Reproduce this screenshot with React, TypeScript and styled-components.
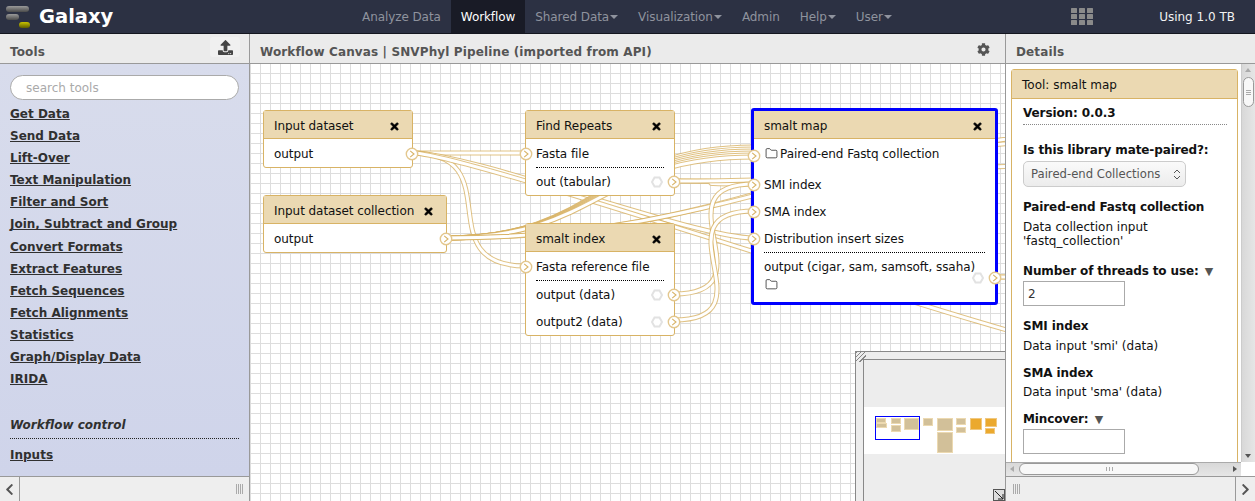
import React from 'react';
import styled, { createGlobalStyle } from 'styled-components';
import { FaCog, FaTimes, FaUpload, FaChevronLeft, FaChevronRight } from 'react-icons/fa';
import { Folder } from 'lucide-react';

const GlobalStyle = createGlobalStyle`
  html, body {
    margin: 0;
    height: 100%;
    overflow: hidden;
  }
  body {
    font-family: "DejaVu Sans", Verdana, sans-serif;
    font-size: 12px;
    color: #111;
  }
  * { box-sizing: border-box; }
`;

const Page = styled.div`
  width: 1255px;
  height: 501px;
  display: flex;
  flex-direction: column;
  overflow: hidden;
`;

const Masthead = styled.header`
  height: 34px;
  flex: none;
  display: flex;
  align-items: stretch;
  background: #2c3143;
  border-bottom: 1px solid #14161f;
`;

const Brand = styled.div`
  width: 352px;
  display: flex;
  align-items: center;
  gap: 8px;
  padding-left: 6px;
  color: #fff;
  font-size: 19.5px;
  font-weight: 700;
`;

const Nav = styled.nav`
  display: flex;
  width: 741px;
  letter-spacing: -0.08px;
`;

const NavItem = styled.a<{ $active?: boolean }>`
  display: flex;
  align-items: center;
  padding: 0 10px;
  color: ${props => (props.$active ? '#fff' : '#8f939e')};
  background: ${props => (props.$active ? '#191b26' : 'transparent')};
`;

const AppsItem = styled(NavItem)`
  margin-left: auto;
  padding: 0;
`;

const Caret = styled.span`
  width: 0;
  height: 0;
  margin-left: 1px;
  margin-top: 1px;
  border-left: 4px solid transparent;
  border-right: 4px solid transparent;
  border-top: 4px solid #8f939e;
`;

const Quota = styled.div`
  margin-left: auto;
  padding-right: 20px;
  display: flex;
  align-items: center;
  color: #f2f2f2;
`;

const Panels = styled.div`
  flex: 1;
  display: flex;
  min-height: 0;
`;

const SidePanel = styled.section<{ $width: number }>`
  width: ${props => props.$width}px;
  flex: none;
  display: flex;
  flex-direction: column;
`;

const CenterPanel = styled.section`
  flex: 1;
  display: flex;
  flex-direction: column;
  min-width: 0;
  border-left: 1px solid #999;
  border-right: 1px solid #999;
`;

const PanelHeader = styled.div`
  height: 30px;
  flex: none;
  display: flex;
  align-items: center;
  justify-content: space-between;
  padding: 6px 10px 0;
  background: #ebebeb;
  border-bottom: 1px solid #999;
  color: #555;
  font-weight: 700;
  letter-spacing: 0.13px;
`;

const UploadButton = styled.span`
  width: 30px;
  height: 20px;
  margin: -9px -1px 0 0;
  display: flex;
  align-items: center;
  justify-content: center;
  color: #444;
  background: #f0f0f0;
  border-radius: 3px;
`;

const CogButton = styled.span`
  display: flex;
  margin: -5px 5px 0 0;
  color: #555;
`;

const ToolsBody = styled.div`
  flex: 1;
  min-height: 0;
  padding: 11px 10px 0;
  background: linear-gradient(#d8dcec, #cfd4ea);
`;

const SearchInput = styled.input`
  display: block;
  width: 229px;
  height: 25px;
  padding: 0 15px;
  border: 1px solid #aaa;
  border-radius: 13px;
  background: #fff;
  font-family: inherit;
  font-size: 12px;
  margin-bottom: 2.95px;
  &::placeholder { color: #aaa; opacity: 1; }
`;

const ToolLink = styled.a`
  display: block;
  height: 22.1px;
  line-height: 22px;
  color: #303030;
  font-weight: 700;
  text-decoration: underline;
`;

const SectionLabel = styled.div`
  margin-top: 24px;
  padding-bottom: 5px;
  height: 25px;
  line-height: 22px;
  border-bottom: 1px dotted #222;
  color: #303030;
  font-weight: 700;
  font-style: italic;
  margin-bottom: 5px;
`;

const PanelFooter = styled.div<{ $flip?: boolean }>`
  height: 25px;
  flex: none;
  display: flex;
  flex-direction: ${props => (props.$flip ? 'row-reverse' : 'row')};
  align-items: stretch;
  background: #eee;
  border-top: 1px solid #999;
`;

const CollapseButton = styled.span<{ $flip?: boolean }>`
  width: 20px;
  display: flex;
  align-items: center;
  justify-content: center;
  color: #555;
  ${props => (props.$flip ? 'border-left' : 'border-right')}: 1px solid #999;
`;

const DragHandle = styled.span<{ $flip?: boolean }>`
  width: 8px;
  height: 10px;
  align-self: center;
  ${props => (props.$flip ? 'margin-right: 214px;' : 'margin-left: 216px;')}
  background: repeating-linear-gradient(90deg, #aaa 0 1px, transparent 1px 2px);
`;

const Canvas = styled.div`
  position: relative;
  flex: 1;
  min-height: 0;
  overflow: hidden;
  background-color: #fff;
  background-image:
    linear-gradient(#ddd 1px, transparent 1px),
    linear-gradient(90deg, #ddd 1px, transparent 1px);
  background-size: 10px 10px;
  background-position: 0 9px, 0 0;
`;

const NoodleLayer = styled.svg`
  position: absolute;
  left: 0;
  top: 0;
  overflow: visible;
`;

const Node = styled.div<{ $x: number; $y: number; $w: number; $selected?: boolean }>`
  position: absolute;
  left: ${props => props.$x}px;
  top: ${props => props.$y}px;
  width: ${props => props.$w}px;
  background: #fff;
  border: ${props => (props.$selected ? '3px solid #0000ff' : '1px solid #d8b365')};
  border-radius: 3px;
  letter-spacing: -0.06px;
`;

const NodeTitle = styled.div`
  height: 28px;
  display: flex;
  align-items: center;
  justify-content: space-between;
  padding: 2px 12px 0 10px;
  background: #ebd9b2;
  border-bottom: 1px solid #d8b365;
`;

const NodeClose = styled.span`
  display: flex;
  margin-top: 1px;
  color: #000;
  svg { stroke: #000; stroke-width: 30; }
`;

const NodeBody = styled.div`
  padding: 1px 10px 0;
`;

const Row = styled.div<{ $tall?: boolean }>`
  position: relative;
  min-height: ${props => (props.$tall ? 31 : 27)}px;
  padding-bottom: ${props => (props.$tall ? 4 : 0)}px;
  display: flex;
  align-items: center;
  gap: 1px;
  white-space: nowrap;
`;

const OutputRows = styled.div`
  border-top: 1px dotted #000;
`;

const MultiLine = styled.div`
  padding: 6px 0 11px;
  line-height: 16px;
  display: flex;
  flex-direction: column;
  align-items: flex-start;
  gap: 3px;
`;

const Terminal = styled.svg`
  position: absolute;
  top: 50%;
  margin-top: -7px;
`;

const InTerminalIcon = styled(Terminal)`
  left: -17px;
`;

const OutTerminalIcon = styled(Terminal)`
  right: -17px;
`;

const Callout = styled.svg`
  position: absolute;
  top: 50%;
  right: 1px;
  margin-top: -6px;
`;

const FolderIcon = styled(Folder)`
  margin: 0 1px 0 1px;
  flex: none;
`;

const Overview = styled.div`
  position: absolute;
  right: 0;
  bottom: 0;
  width: 150px;
  height: 150px;
  background: #ededed;
  border: 1px solid #888;
  border-width: 1px 0 0 1px;
  padding: 7px 0 0 7px;
`;

const OverviewGrip = styled.span`
  position: absolute;
  left: 0;
  top: 0;
  width: 10px;
  height: 10px;
  background: repeating-linear-gradient(135deg, #888 0 1px, transparent 1px 3px);
`;

const OverviewInner = styled.div`
  position: relative;
  height: 100%;
  background: #ededed;
  border: 1px solid #888;
  border-width: 1px 0 0 1px;
`;

const OverviewBand = styled.div`
  position: absolute;
  left: 0;
  right: 0;
  top: 47px;
  height: 47px;
  background: #fff;
`;

const MiniNode = styled.span<{ $x: number; $y: number; $w: number; $h: number; $hot?: boolean }>`
  position: absolute;
  left: ${props => props.$x}px;
  top: ${props => props.$y}px;
  width: ${props => props.$w}px;
  height: ${props => props.$h}px;
  background: ${props => (props.$hot ? '#eba92e' : '#d2c099')};
  border: 1px solid ${props => (props.$hot ? '#f0c880' : '#ecd9b0')};
`;

const MiniViewport = styled.span`
  position: absolute;
  left: 11px;
  top: 56px;
  width: 45px;
  height: 24px;
  border: 1px solid #0000ff;
`;

const OverviewResize = styled.svg`
  position: absolute;
  right: 0;
  bottom: 0;
`;

const DetailsBody = styled.div`
  position: relative;
  flex: 1;
  min-height: 0;
  overflow: hidden;
  background: #fff;
`;

const ToolCard = styled.div`
  position: absolute;
  left: 5px;
  top: 5px;
  width: 227px;
  height: 500px;
  background: #fff;
  border: 1px solid #d8b365;
  border-radius: 3px 3px 0 0;
`;

const ToolCardTitle = styled.div`
  height: 29px;
  display: flex;
  align-items: center;
  padding: 2px 0 0 10px;
  background: #ebd9b2;
  border-bottom: 1px solid #d8b365;
`;

const ToolCardBody = styled.div`
  padding: 7px 10px 0 11px;
`;

const VersionLine = styled.div`
  height: 19px;
  padding-bottom: 3px;
  line-height: 15px;
  font-weight: 700;
  border-bottom: 1px dotted #888;
  width: 204px;
  margin-bottom: 18px;
  letter-spacing: -0.1px;
`;

const ParamLabel = styled.div<{ $gap?: number }>`
  font-weight: 700;
  line-height: 15px;
  margin-top: ${props => props.$gap ?? 0}px;
  white-space: nowrap;
  letter-spacing: -0.12px;
`;

const ParamText = styled.div<{ $gap: number }>`
  line-height: 14px;
  margin-top: ${props => props.$gap}px;
  white-space: nowrap;
`;

const Triangle = styled.span`
  color: #555;
  font-weight: 400;
  font-size: 11px;
  margin-left: 2px;
`;

const SelectBox = styled.div`
  width: 163px;
  height: 26px;
  margin-top: 3px;
  display: flex;
  align-items: center;
  justify-content: space-between;
  padding: 0 4px 0 7px;
  color: #555;
  font-size: 11.65px;
  background: linear-gradient(#fafafa, #ececec);
  border: 1px solid #ccc;
  border-radius: 5px;
`;

const NumberBox = styled.input`
  display: block;
  width: 102px;
  height: 25px;
  margin-top: 2px;
  padding: 0 4px;
  border: 1px solid #aaa;
  background: #fff;
  font-family: inherit;
  font-size: 12px;
  color: #333;
`;

const VerticalBar = styled.div`
  position: absolute;
  right: 0;
  top: 0;
  bottom: 14px;
  width: 14px;
  background: linear-gradient(90deg, #d8d8d8, #e6e6e6);
  border-left: 1px solid #ccc;
`;

const VerticalThumb = styled.span`
  position: absolute;
  left: 1px;
  top: 13px;
  width: 11px;
  height: 30px;
  display: flex;
  align-items: center;
  justify-content: center;
  background: #f8f8f8;
  border: 1px solid #999;
  border-radius: 6px;
  &::after {
    content: '';
    width: 5px;
    height: 5px;
    background: repeating-linear-gradient(#aaa 0 1px, transparent 1px 2px);
  }
`;

const HorizontalBar = styled.div`
  position: absolute;
  left: 0;
  right: 14px;
  bottom: 0;
  height: 14px;
  background: linear-gradient(#d8d8d8, #e6e6e6);
  border-top: 1px solid #aaa;
`;

const HorizontalThumb = styled.span`
  position: absolute;
  left: 13px;
  top: 0;
  width: 180px;
  height: 12px;
  display: flex;
  align-items: center;
  justify-content: center;
  background: #f8f8f8;
  border: 1px solid #999;
  border-radius: 6px;
  &::after {
    content: '';
    width: 7px;
    height: 4px;
    background: repeating-linear-gradient(90deg, #aaa 0 1px, transparent 1px 3px);
  }
`;

const ScrollArrow = styled.span<{ $dir: 'up' | 'down' | 'left' | 'right' }>`
  position: absolute;
  width: 0;
  height: 0;
  ${props => {
    switch (props.$dir) {
      case 'up':
        return 'left: 3px; top: 1px; border: 3px solid transparent; border-bottom: 4px solid #aaa;';
      case 'down':
        return 'left: 3px; bottom: 1px; border: 3px solid transparent; border-top: 4px solid #555;';
      case 'left':
        return 'left: 1px; top: 3px; border: 3px solid transparent; border-right: 4px solid #aaa;';
      default:
        return 'right: 1px; top: 3px; border: 3px solid transparent; border-left: 4px solid #555;';
    }
  }}
`;

const toolLinks = [
  'Get Data', 'Send Data', 'Lift-Over', 'Text Manipulation', 'Filter and Sort',
  'Join, Subtract and Group', 'Convert Formats', 'Extract Features', 'Fetch Sequences',
  'Fetch Alignments', 'Statistics', 'Graph/Display Data', 'IRIDA',
];

const navItems = [
  { label: 'Analyze Data' },
  { label: 'Workflow', active: true },
  { label: 'Shared Data', caret: true },
  { label: 'Visualization', caret: true },
  { label: 'Admin' },
  { label: 'Help', caret: true },
  { label: 'User', caret: true },
];

// canvas starts at page (250, 64), noodle points are in page coordinates
// x1, y1, x2, y2, control point shift
const noodles: [number, number, number, number, number][] = [
  [412, 153, 526, 153, 100],
  [412, 153, 526, 266, 100],
  [412, 153, 754, 238, 60],
  [412, 153, 1100, 352, 60],
  [446, 238, 754, 147, 154],
  [446, 238, 754, 149, 154],
  [446, 238, 754, 151, 154],
  [446, 238, 754, 153, 154],
  [446, 238, 754, 155, 154],
  [446, 238, 754, 157, 154],
  [446, 238, 1100, 140, 300],
  [446, 238, 1150, 130, 300],
  [674, 181, 754, 184, 100],
  [674, 181, 1100, 165, 200],
  [674, 294, 754, 184, 100],
  [674, 320, 754, 211, 100],
  [995, 277, 1100, 270, 100],
  [995, 277, 1100, 280, 100],
];

const noodlePath = ([x1, y1, x2, y2, shift]: [number, number, number, number, number]) => {
  const o = [x1 - 250, y1 - 64, x2 - 250, y2 - 64];
  return `M${o[0]} ${o[1]} C${o[0] + shift} ${o[1]} ${o[2] - shift} ${o[3]} ${o[2]} ${o[3]}`;
};

const miniNodes = [
  { x: 12, y: 58, w: 10, h: 5 },
  { x: 12, y: 63, w: 11, h: 5 },
  { x: 27, y: 58, w: 10, h: 6 },
  { x: 27, y: 65, w: 10, h: 7 },
  { x: 40, y: 58, w: 15, h: 12 },
  { x: 59, y: 58, w: 10, h: 8 },
  { x: 73, y: 58, w: 16, h: 13 },
  { x: 73, y: 72, w: 16, h: 21 },
  { x: 92, y: 58, w: 10, h: 7 },
  { x: 92, y: 67, w: 10, h: 6 },
  { x: 106, y: 58, w: 12, h: 12, hot: true },
  { x: 121, y: 58, w: 12, h: 9, hot: true },
  { x: 121, y: 68, w: 10, h: 6, hot: true },
];

const TerminalMark = () => (
  <>
    <circle cx="7" cy="7" r="5.7" fill="#fff" stroke="#e3c78e" strokeWidth="1.4" />
    <path d="M5.2 3.8 9 7 5.2 10.2" fill="none" stroke="#d8b365" strokeWidth="1.1" />
  </>
);

const InTerminal = () => (
  <InTerminalIcon width="14" height="14" viewBox="0 0 14 14"><TerminalMark /></InTerminalIcon>
);

const OutTerminal = () => (
  <OutTerminalIcon width="14" height="14" viewBox="0 0 14 14"><TerminalMark /></OutTerminalIcon>
);

const HexMark = () => (
  <Callout width="12" height="12" viewBox="0 0 12 12">
    <path d="M3.5 1.5h5L11 6 8.5 10.5h-5L1 6z" fill="#fff" stroke="#e2e2e2" strokeWidth="2" />
  </Callout>
);

const Logo = () => (
  <svg width="25" height="24" viewBox="0 0 25 24" style={{ marginTop: 3 }}>
    <defs>
      <linearGradient id="bar" x1="0" y1="0" x2="0" y2="1">
        <stop offset="0" stopColor="#9a9a9a" />
        <stop offset="1" stopColor="#4a4a4a" />
      </linearGradient>
      <linearGradient id="barHot" x1="0" y1="0" x2="0" y2="1">
        <stop offset="0" stopColor="#c9c400" />
        <stop offset="1" stopColor="#5f5c00" />
      </linearGradient>
    </defs>
    <rect x="0" y="0" width="23" height="6" rx="3" fill="url(#bar)" />
    <rect x="0" y="8" width="13" height="6" rx="3" fill="url(#bar)" />
    <rect x="13" y="16" width="11" height="6" rx="3" fill="url(#barHot)" />
  </svg>
);

const AppGrid = () => (
  <svg width="22" height="17" viewBox="0 0 22 17" fill="#8a8a8a">
    {[0, 6, 12].map(y =>
      [0, 8, 16].map(x => <rect key={`${x}-${y}`} x={x} y={y} width="6" height="5" rx="0.5" />)
    )}
  </svg>
);

const App: React.FC = () => {
  return (
    <Page>
      <GlobalStyle />
      <Masthead>
        <Brand>
          <Logo />
          Galaxy
        </Brand>
        <Nav>
          {navItems.map(item => (
            <NavItem key={item.label} $active={item.active}>
              {item.label}
              {item.caret && <Caret />}
            </NavItem>
          ))}
          <AppsItem><AppGrid /></AppsItem>
        </Nav>
        <Quota>Using 1.0 TB</Quota>
      </Masthead>

      <Panels>
        <SidePanel $width={249}>
          <PanelHeader>
            Tools
            <UploadButton><FaUpload size={15} /></UploadButton>
          </PanelHeader>
          <ToolsBody>
            <SearchInput placeholder="search tools" />
            {toolLinks.map(name => (
              <ToolLink key={name}>{name}</ToolLink>
            ))}
            <SectionLabel>Workflow control</SectionLabel>
            <ToolLink>Inputs</ToolLink>
          </ToolsBody>
          <PanelFooter>
            <CollapseButton><FaChevronLeft size={13} /></CollapseButton>
            <DragHandle />
          </PanelFooter>
        </SidePanel>

        <CenterPanel>
          <PanelHeader>
            Workflow Canvas | SNVPhyl Pipeline (imported from API)
            <CogButton><FaCog size={13} /></CogButton>
          </PanelHeader>
          <Canvas>
            <NoodleLayer width="755" height="437">
              {noodles.map((n, i) => (
                <g key={i} fill="none">
                  <path d={noodlePath(n)} stroke="#d8b365" strokeOpacity="0.8" strokeWidth="5" />
                  <path d={noodlePath(n)} stroke="#fff" strokeWidth="3" />
                </g>
              ))}
            </NoodleLayer>

            <Node $x={13} $y={46} $w={150}>
              <NodeTitle>Input dataset<NodeClose><FaTimes size={11} /></NodeClose></NodeTitle>
              <NodeBody>
                <Row>output<OutTerminal /></Row>
              </NodeBody>
            </Node>

            <Node $x={13} $y={131} $w={184}>
              <NodeTitle>Input dataset collection<NodeClose><FaTimes size={11} /></NodeClose></NodeTitle>
              <NodeBody>
                <Row>output<OutTerminal /></Row>
              </NodeBody>
            </Node>

            <Node $x={275} $y={46} $w={150}>
              <NodeTitle>Find Repeats<NodeClose><FaTimes size={11} /></NodeClose></NodeTitle>
              <NodeBody>
                <Row><InTerminal />Fasta file</Row>
                <OutputRows>
                  <Row>out (tabular)<HexMark /><OutTerminal /></Row>
                </OutputRows>
              </NodeBody>
            </Node>

            <Node $x={275} $y={159} $w={150}>
              <NodeTitle>smalt index<NodeClose><FaTimes size={11} /></NodeClose></NodeTitle>
              <NodeBody>
                <Row><InTerminal />Fasta reference file</Row>
                <OutputRows>
                  <Row>output (data)<HexMark /><OutTerminal /></Row>
                  <Row>output2 (data)<HexMark /><OutTerminal /></Row>
                </OutputRows>
              </NodeBody>
            </Node>

            <Node $x={501} $y={44} $w={247} $selected>
              <NodeTitle>smalt map<NodeClose><FaTimes size={11} /></NodeClose></NodeTitle>
              <NodeBody>
                <Row $tall><InTerminal /><FolderIcon size={13} strokeWidth={1.3} />Paired-end Fastq collection</Row>
                <Row><InTerminal />SMI index</Row>
                <Row><InTerminal />SMA index</Row>
                <Row><InTerminal />Distribution insert sizes</Row>
                <OutputRows>
                  <Row>
                    <MultiLine>
                      output (cigar, sam, samsoft, ssaha)
                      <FolderIcon size={13} strokeWidth={1.3} />
                    </MultiLine>
                    <HexMark />
                    <OutTerminal />
                  </Row>
                </OutputRows>
              </NodeBody>
            </Node>

            <Overview>
              <OverviewGrip />
              <OverviewInner>
                <OverviewBand />
                {miniNodes.map((m, i) => (
                  <MiniNode key={i} $x={m.x} $y={m.y} $w={m.w} $h={m.h} $hot={m.hot} />
                ))}
                <MiniViewport />
                <OverviewResize width="12" height="12" viewBox="0 0 12 12">
                  <rect x="0.5" y="0.5" width="11" height="11" fill="#ddd" stroke="#555" />
                  <path d="M2 2 10 10M10 5V10H5" fill="none" stroke="#222" strokeWidth="1" />
                </OverviewResize>
              </OverviewInner>
            </Overview>
          </Canvas>
        </CenterPanel>

        <SidePanel $width={249}>
          <PanelHeader>Details</PanelHeader>
          <DetailsBody>
            <ToolCard>
              <ToolCardTitle>Tool: smalt map</ToolCardTitle>
              <ToolCardBody>
                <VersionLine>Version: 0.0.3</VersionLine>
                <ParamLabel>Is this library mate-paired?:</ParamLabel>
                <SelectBox>
                  Paired-end Collections
                  <svg width="8" height="12" viewBox="0 0 8 12" fill="none" stroke="#555" strokeWidth="1">
                    <path d="M1 5 4 2 7 5M1 8 4 11 7 8" />
                  </svg>
                </SelectBox>
                <ParamLabel $gap={13}>Paired-end Fastq collection</ParamLabel>
                <ParamText $gap={5}>Data collection input<br />'fastq_collection'</ParamText>
                <ParamLabel $gap={16}>Number of threads to use: <Triangle>▼</Triangle></ParamLabel>
                <NumberBox defaultValue="2" />
                <ParamLabel $gap={13}>SMI index</ParamLabel>
                <ParamText $gap={5}>Data input 'smi' (data)</ParamText>
                <ParamLabel $gap={13}>SMA index</ParamLabel>
                <ParamText $gap={4}>Data input 'sma' (data)</ParamText>
                <ParamLabel $gap={13}>Mincover: <Triangle>▼</Triangle></ParamLabel>
                <NumberBox />
              </ToolCardBody>
            </ToolCard>
            <VerticalBar>
              <ScrollArrow $dir="up" />
              <VerticalThumb />
              <ScrollArrow $dir="down" />
            </VerticalBar>
            <HorizontalBar>
              <ScrollArrow $dir="left" />
              <HorizontalThumb />
              <ScrollArrow $dir="right" />
            </HorizontalBar>
          </DetailsBody>
          <PanelFooter $flip>
            <CollapseButton $flip><FaChevronRight size={13} /></CollapseButton>
            <DragHandle $flip />
          </PanelFooter>
        </SidePanel>
      </Panels>
    </Page>
  );
};

export default App;
